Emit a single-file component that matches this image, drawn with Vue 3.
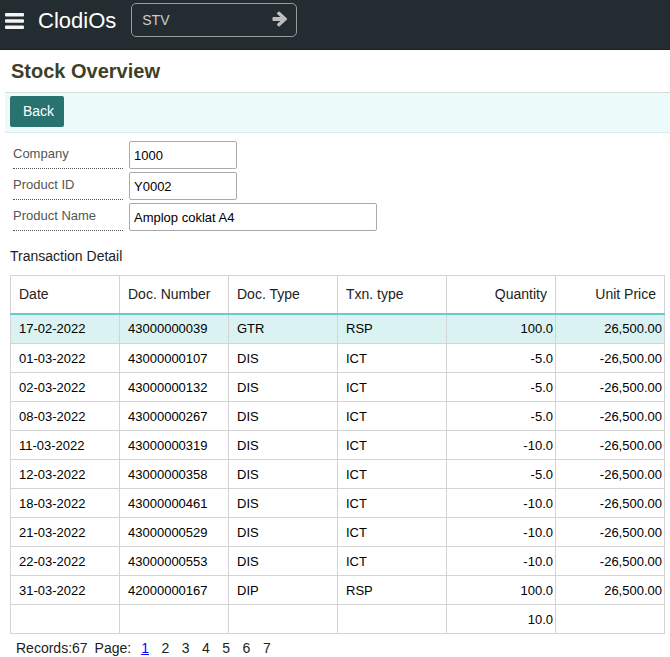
<script setup>
import { ref } from 'vue'

const command = ref('STV')

const fields = ref([
  { id: 'company', label: 'Company', value: '1000', wide: false },
  { id: 'product-id', label: 'Product ID', value: 'Y0002', wide: false },
  { id: 'product-name', label: 'Product Name', value: 'Amplop coklat A4', wide: true },
])

const columns = [
  { title: 'Date' },
  { title: 'Doc. Number' },
  { title: 'Doc. Type' },
  { title: 'Txn. type' },
  { title: 'Quantity', numeric: true },
  { title: 'Unit Price', numeric: true },
]

const rows = [
  ['17-02-2022', '43000000039', 'GTR', 'RSP', '100.0', '26,500.00'],
  ['01-03-2022', '43000000107', 'DIS', 'ICT', '-5.0', '-26,500.00'],
  ['02-03-2022', '43000000132', 'DIS', 'ICT', '-5.0', '-26,500.00'],
  ['08-03-2022', '43000000267', 'DIS', 'ICT', '-5.0', '-26,500.00'],
  ['11-03-2022', '43000000319', 'DIS', 'ICT', '-10.0', '-26,500.00'],
  ['12-03-2022', '43000000358', 'DIS', 'ICT', '-5.0', '-26,500.00'],
  ['18-03-2022', '43000000461', 'DIS', 'ICT', '-10.0', '-26,500.00'],
  ['21-03-2022', '43000000529', 'DIS', 'ICT', '-10.0', '-26,500.00'],
  ['22-03-2022', '43000000553', 'DIS', 'ICT', '-10.0', '-26,500.00'],
  ['31-03-2022', '42000000167', 'DIP', 'RSP', '100.0', '26,500.00'],
]
const totals = ['', '', '', '', '10.0', '']

const selected = ref(0)
const page = ref(1)
</script>

<template>
  <header class="topbar">
    <button class="menu" type="button" aria-label="Menu">
      <svg width="20" height="18" viewBox="0 0 20 18">
        <g fill="#f4f4f4">
          <rect x="0" y="1" width="19" height="3.5" rx="1" />
          <rect x="0" y="7.2" width="19" height="3.5" rx="1" />
          <rect x="0" y="13.4" width="19" height="3.5" rx="1" />
        </g>
      </svg>
    </button>
    <span class="brand">ClodiOs</span>
    <form class="command" @submit.prevent>
      <input v-model="command" type="text" aria-label="Command" />
      <button type="submit" aria-label="Go">
        <svg width="16" height="16" viewBox="0 0 16 16">
          <path
            d="M1.3 6H8.4L5.3 3.2Q4.6 2.5 5.3 1.8L6.3 0.8Q7 0.1 7.7 0.8L14.8 7.3Q15.5 8 14.8 8.7L7.7 15.2Q7 15.9 6.3 15.2L5.3 14.2Q4.6 13.5 5.3 12.8L8.4 10H1.3Q0.5 10 0.5 9.2V6.8Q0.5 6 1.3 6Z"
            fill="#bdbdbd"
          />
        </svg>
      </button>
    </form>
  </header>

  <main>
    <h1>Stock Overview</h1>
    <div class="toolbar">
      <button class="back" type="button">Back</button>
    </div>

    <form class="fields" @submit.prevent>
      <div v-for="f in fields" :key="f.id" class="field">
        <label :for="f.id">{{ f.label }}</label>
        <input :id="f.id" v-model="f.value" type="text" :class="{ wide: f.wide }" />
      </div>
    </form>

    <section class="detail">
      <h2>Transaction Detail</h2>
      <table>
        <thead>
          <tr>
            <th v-for="c in columns" :key="c.title" scope="col" :class="{ num: c.numeric }">{{ c.title }}</th>
          </tr>
        </thead>
        <tbody>
          <tr v-for="(r, i) in rows" :key="r[1]" :class="{ selected: i === selected }" @click="selected = i">
            <td v-for="(cell, j) in r" :key="j" :class="{ num: columns[j].numeric }">{{ cell }}</td>
          </tr>
        </tbody>
        <tfoot>
          <tr>
            <td v-for="(cell, j) in totals" :key="j" :class="{ num: columns[j].numeric }">{{ cell }}</td>
          </tr>
        </tfoot>
      </table>
      <nav class="pager" aria-label="Pages">
        <span>Records:67</span>
        <span>Page:</span>
        <div class="pages">
          <a v-for="n in 7" :key="n" href="#" :class="{ current: n === page }" @click.prevent="page = n">{{ n }}</a>
        </div>
      </nav>
    </section>
  </main>
</template>

<style>
body {
  margin: 0;
  background: #fff;
  color: #222;
  font-family: "Liberation Sans", Arial, sans-serif;
  font-size: 14px;
}
</style>

<style scoped>
* {
  box-sizing: border-box;
}
button,
input {
  font-family: inherit;
}
.topbar {
  display: flex;
  align-items: flex-start;
  height: 50px;
  padding: 3px 5px;
  background: #232d31;
  border-bottom: 1px solid #1b2326;
}
.menu {
  display: flex;
  padding: 9px 0 0;
  border: 0;
  background: none;
}
.brand {
  margin-left: 13px;
  color: #fff;
  font-size: 22px;
  line-height: 36px;
}
.command {
  display: flex;
  align-items: center;
  width: 166px;
  height: 34px;
  margin-left: 15px;
  padding: 0 8px 0 10px;
  border: 1px solid #999;
  border-radius: 5px;
}
.command input {
  flex: 1;
  min-width: 0;
  padding: 0;
  border: 0;
  outline: 0;
  background: none;
  color: #ccc;
  font-size: 14px;
}
.command button {
  display: flex;
  padding: 0 0 2px;
  border: 0;
  background: none;
}
main {
  padding-left: 5px;
}
h1 {
  margin: 0;
  padding: 0 6px;
  color: #3f3f26;
  font-size: 20px;
  line-height: 42px;
}
.toolbar {
  display: flex;
  height: 41px;
  padding: 3px 5px;
  border-top: 1px solid #d5dddd;
  border-bottom: 1px solid #d3eef1;
  background: #edfafa;
}
.back {
  width: 54px;
  height: 31px;
  padding: 0 0 2px 3px;
  border: 0;
  border-radius: 2px;
  background: #28736f;
  color: #fff;
  font-size: 14px;
}
.fields {
  display: grid;
  gap: 3px;
  padding: 8px 8px 0;
}
.field {
  display: flex;
  gap: 6px;
}
.field label {
  width: 110px;
  height: 28px;
  border-bottom: 1px dotted #555;
  color: #555;
  font-size: 13px;
  line-height: 26px;
}
.field input {
  width: 108px;
  height: 28px;
  padding: 1px 4px 0;
  border: 1px solid #aaa;
  border-radius: 2px;
  background: #fff;
  color: #000;
  font-size: 13px;
}
.field input.wide {
  width: 248px;
}
.detail {
  padding: 15px 5px 0;
}
h2 {
  margin: 0;
  font-size: 14px;
  font-weight: normal;
  line-height: 20px;
}
table {
  width: 100%;
  margin-top: 9px;
  border-collapse: collapse;
  table-layout: fixed;
}
th,
td {
  border: 1px solid #d4d4d4;
  text-align: left;
}
th {
  height: 38px;
  padding: 0 8px;
  border-bottom: 2px solid #65cdc6;
  font-size: 14px;
  font-weight: normal;
}
td {
  height: 29px;
  padding: 0 2px 0 8px;
  color: #000;
  font-size: 13px;
}
tbody tr:first-child td {
  height: 30px;
}
.num {
  text-align: right;
}
.selected td {
  background: #daf2f2;
}
.pager {
  display: flex;
  padding-left: 6px;
  gap: 7px;
  line-height: 28px;
}
.pages {
  display: flex;
  width: 142px;
  margin-left: 3px;
}
.pages a {
  flex: 1;
  color: #222;
  text-decoration: none;
}
.pages a.current {
  color: #00f;
  text-decoration: underline;
}
</style>
